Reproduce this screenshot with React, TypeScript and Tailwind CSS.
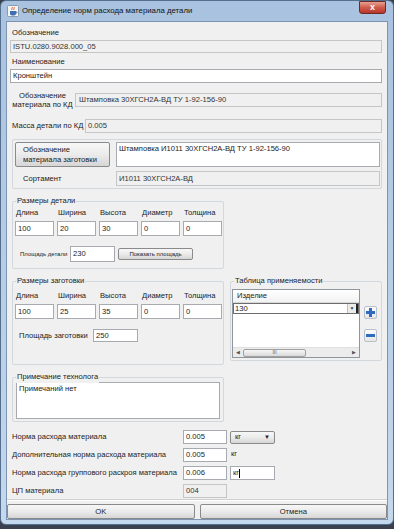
import React from "react";

function Field({ children, dis, className = "" }: { children?: React.ReactNode; dis?: boolean; className?: string }) {
  return (
    <div
      className={`flex items-center px-[2px] border leading-none whitespace-nowrap overflow-hidden ${
        dis ? "bg-[#f0f0f0] border-[#c6c6c6] text-[#333]" : "bg-white border-[#a7abb0]"
      } ${className}`}
    >
      {children}
    </div>
  );
}

function Group({ title, className = "", children }: { title: string; className?: string; children?: React.ReactNode }) {
  return (
    <div className={`relative border border-[#d3d8dc] rounded-[2px] ${className}`}>
      <span className="absolute left-[3px] top-[-7px] px-[1px] bg-[#f0f0f0] leading-[12px]">{title}</span>
      {children}
    </div>
  );
}

function WinButton({ children, className = "" }: { children?: React.ReactNode; className?: string }) {
  return (
    <div
      className={`border border-[#8a8a8a] rounded-[2px] bg-gradient-to-b from-[#f7f7f7] via-[#ebebeb] to-[#d6d6d6] ${className}`}
    >
      {children}
    </div>
  );
}

const dims = ["Длина", "Ширина", "Высота", "Диаметр", "Толщина"];

function Sizes({ values }: { values: string[] }) {
  return (
    <>
      <div className="flex gap-[3px] pl-[2px]">
        {dims.map((d) => (
          <div key={d} className="w-[39px] pl-[1px] leading-[12px] whitespace-nowrap">
            {d}
          </div>
        ))}
      </div>
      <div className="flex gap-[3px] pl-[2px] mt-[2px]">
        {values.map((v, i) => (
          <Field key={i} className="w-[39px] h-[15px]">
            {v}
          </Field>
        ))}
      </div>
    </>
  );
}

function JavaIcon() {
  return (
    <svg width="12" height="12" viewBox="0 0 12 12">
      <rect x="0.5" y="0.5" width="11" height="11" rx="1" fill="#f4f4f4" stroke="#8a9bb0" />
      <path d="M5 2c1 1-1 2 0 3M7 2c1 1-1 2 0 3" stroke="#d9531e" strokeWidth="0.9" fill="none" />
      <path d="M3 6h6v2.5a2 2 0 0 1-2 2H5a2 2 0 0 1-2-2z" fill="#3f6fb3" />
      <path d="M9 7h1v1H9" stroke="#3f6fb3" strokeWidth="0.8" fill="none" />
    </svg>
  );
}

function PlusMinus({ minus }: { minus?: boolean }) {
  return (
    <div className="w-[13px] h-[13px] border border-[#b9c0c8] rounded-[2px] bg-gradient-to-b from-[#fbfbfb] to-[#e6e6e6] flex items-center justify-center">
      <svg width="11" height="11" viewBox="0 0 11 11">
        {minus ? (
          <rect x="1" y="4" width="9" height="3" fill="#2f6cc0" />
        ) : (
          <path d="M4 1h3v3h3v3H7v3H4V7H1V4h3z" fill="#2f6cc0" />
        )}
      </svg>
    </div>
  );
}

export default function App() {
  return (
    <div className="w-[394px] h-[529px] bg-[#38414d] overflow-hidden font-['Liberation_Sans',Arial,sans-serif] text-[7.6px] text-[#222]">
      <div className="h-[525px] rounded-[6px] border border-[#55708f] bg-gradient-to-b from-[#a9c2df] to-[#c4d8ee] flex flex-col px-[5px]">
        {/* title bar */}
        <div className="h-[20px] flex items-center">
          <div className="ml-[1px]">
            <JavaIcon />
          </div>
          <span className="ml-[3px] text-[7.8px] text-[#111]">Определение норм расхода материала детали</span>
          <div className="ml-auto mr-[2px] self-start w-[27px] h-[13px] rounded-b-[3px] border border-[#6e2a22] bg-gradient-to-b from-[#e6a091] via-[#cf5b4b] to-[#b8342a] flex items-center justify-center text-white text-[9px] font-bold leading-none">
            x
          </div>
        </div>

        {/* client area */}
        <div className="h-[499px] border border-[#7d95b3] bg-[#f0f0f0] flex flex-col">
          <div className="flex flex-col pl-[3px] pr-[5px]">
            <div className="mt-[5px] pl-[2px] leading-[12px]">Обозначение</div>
            <Field dis className="mt-[1px] h-[13px]">ISTU.0280.9028.000_05</Field>
            <div className="mt-[3px] pl-[2px] leading-[12px]">Наименование</div>
            <Field className="mt-[1px] h-[14px]">Кронштейн</Field>

            <div className="mt-[4px] h-[26px] flex items-center">
              <div className="w-[65px] text-center leading-[9px]">
                Обозначение
                <br />
                материала по КД
              </div>
              <Field dis className="flex-1 h-[14px] pl-[3px]">
                Штамповка 30ХГСН2А-ВД ТУ 1-92-156-90
              </Field>
            </div>

            <div className="mt-[6px] h-[14px] flex items-center">
              <div className="w-[75px] pl-[2px] whitespace-nowrap">Масса детали по КД</div>
              <Field dis className="flex-1 h-[14px]">0.005</Field>
            </div>

            <div className="ml-[2px] mt-[6px] h-[50px] border border-[#d3d8dc] rounded-[2px] flex flex-col pl-[2px] pr-[1px] pt-[2px]">
              <div className="flex gap-[6px]">
                <WinButton className="w-[95px] h-[25px] flex flex-col justify-center pl-[7px] leading-[10px]">
                  <span>Обозначение</span>
                  <span>материала заготовки</span>
                </WinButton>
                <div className="flex-1 h-[25px] bg-white border border-[#a7abb0] px-[2px] pt-[2px] leading-none">
                  Штамповка И1011 30ХГСН2А-ВД ТУ 1-92-156-90
                </div>
              </div>
              <div className="flex gap-[6px] mt-[4px] items-center">
                <div className="w-[95px] pl-[8px]">Сортамент</div>
                <Field dis className="flex-1 h-[15px]">И1011 30ХГСН2А-ВД</Field>
              </div>
            </div>

            <Group title="Размеры детали" className="ml-[2px] mt-[12px] w-[212px] h-[68px] pt-[5px]">
              <Sizes values={["100", "20", "30", "0", "0"]} />
              <div className="flex items-center mt-[10px] h-[16px]">
                <div className="w-[57px] pl-[7px] text-[6px] whitespace-nowrap">Площадь детали</div>
                <Field className="w-[45px] h-[16px]">230</Field>
                <WinButton className="ml-[3px] w-[75px] h-[12px] flex items-center justify-center text-[6px] leading-none">
                  Показать площадь
                </WinButton>
              </div>
            </Group>

            <div className="flex mt-[12px]">
              <Group title="Размеры заготовки" className="ml-[2px] w-[212px] h-[84px] pt-[8px]">
                <Sizes values={["100", "25", "35", "0", "0"]} />
                <div className="flex items-center mt-[10px] h-[13px]">
                  <div className="w-[80px] pl-[6px] whitespace-nowrap">Площадь заготовки</div>
                  <Field className="w-[45px] h-[13px]">250</Field>
                </div>
              </Group>

              <Group title="Таблица применяемости" className="ml-[6px] w-[152px] h-[80px] flex">
                <div className="ml-[1px] mt-[7px] w-[128px] h-[69px] border border-[#8e959d] bg-white flex flex-col">
                  <div className="h-[13px] border-b border-[#d8d8d8] bg-gradient-to-b from-white to-[#f2f2f2] flex items-center pl-[4px]">
                    Изделие
                  </div>
                  <div className="h-[11px] border border-[#6d6d6d] flex items-center">
                    <span className="flex-1 pl-[1px]">130</span>
                    <div className="w-[9px] h-[9px] bg-[#ececec] border-l border-[#c0c0c0] flex items-center justify-center text-[5px] text-[#444]">
                      ▼
                    </div>
                    <div className="w-[2px] h-[9px] bg-[#222]" />
                  </div>
                  <div className="flex-1" />
                  <div className="h-[10px] bg-[#ececec] border-t border-[#e0e0e0] flex items-center text-[5px] text-[#555]">
                    <span className="w-[10px] text-center">◀</span>
                    <div className="w-[63px] h-[8px] border border-[#a0a0a0] rounded-[2px] bg-gradient-to-b from-[#f6f6f6] to-[#d9d9d9] flex items-center justify-center text-[5px] leading-none">
                      III
                    </div>
                    <div className="flex-1" />
                    <span className="w-[10px] text-center">▶</span>
                  </div>
                </div>
                <div className="ml-[4px] mt-[24px] flex flex-col gap-[10px]">
                  <PlusMinus />
                  <PlusMinus minus />
                </div>
              </Group>
            </div>

            <Group title="Примечание технолога" className="ml-[2px] mt-[12px] w-[212px] h-[45px] px-[3px] pt-[4px]">
              <div className="h-[37px] bg-white border border-[#a7abb0] px-[2px] pt-[2px] leading-none">Примечаний нет</div>
            </Group>

            <div className="mt-[8px] flex flex-col gap-[4px] pl-[2px]">
              <div className="flex items-center h-[14px]">
                <div className="w-[171px] whitespace-nowrap">Норма расхода материала</div>
                <Field className="w-[44px] h-[14px]">0.005</Field>
                <WinButton className="ml-[3px] w-[45px] h-[13px] flex items-center pl-[4px] pr-[4px]">
                  <span className="flex-1">кг</span>
                  <span className="text-[6px]">▼</span>
                </WinButton>
              </div>
              <div className="flex items-center h-[14px]">
                <div className="w-[171px] whitespace-nowrap">Дополнительная норма расхода материала</div>
                <Field className="w-[44px] h-[14px]">0.005</Field>
                <span className="ml-[4px] self-start">кг</span>
              </div>
              <div className="flex items-center h-[14px]">
                <div className="w-[171px] whitespace-nowrap">Норма расхода группового раскроя материала</div>
                <Field className="w-[44px] h-[14px]">0.006</Field>
                <Field className="ml-[3px] w-[45px] h-[14px]">
                  кг<span className="w-[1px] h-[9px] bg-black" />
                </Field>
              </div>
              <div className="flex items-center h-[14px]">
                <div className="w-[171px]">ЦП материала</div>
                <Field dis className="w-[44px] h-[14px]">004</Field>
              </div>
            </div>
          </div>

          <div className="mt-auto">
            <div className="h-[2px] border-t border-[#d0d0d0] border-b border-b-white" />
            <div className="mt-[3px] flex gap-[5px]">
              <WinButton className="flex-1 h-[15px] flex items-center justify-center">OK</WinButton>
              <WinButton className="flex-1 h-[15px] flex items-center justify-center">Отмена</WinButton>
            </div>
          </div>
        </div>
      </div>
    </div>
  );
}
